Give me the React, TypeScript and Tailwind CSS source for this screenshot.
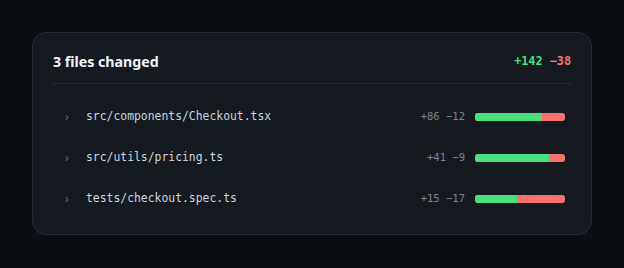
import React from 'react'

// ── Data ──────────────────────────────────────────────────────────────────────
const FILES = [
  { path: 'src/components/Checkout.tsx', add: 86, del: 12, ratio: 74 },
  { path: 'src/utils/pricing.ts', add: 41, del: 9, ratio: 82 },
  { path: 'tests/checkout.spec.ts', add: 15, del: 17, ratio: 47 },
]

const mono = { fontFamily: '"DejaVu Sans Mono", "Liberation Mono", monospace' }

// ── Row ───────────────────────────────────────────────────────────────────────
function FileRow({ file }: { file: (typeof FILES)[number] }) {
  return (
    <div className="flex h-[41px] items-center pl-3 pr-1.5">
      <span className="w-[10px] text-[12px] leading-none text-[#646c77]">›</span>
      <span className="ml-[11px] flex-1 text-[11.4px] text-[#cdd5de]" style={mono}>
        {file.path}
      </span>
      <span className="text-[10.5px] text-[#7d8590]" style={mono}>
        +{file.add} −{file.del}
      </span>
      <div className="ml-2.5 flex h-2 w-[90px] overflow-hidden rounded-[3px] bg-[#f87171]">
        {/* ratio is per-file data */}
        <div className="h-full bg-[#4ade80]" style={{ width: `${file.ratio}%` }} />
      </div>
    </div>
  )
}

// ── App ───────────────────────────────────────────────────────────────────────
export default function App() {
  return (
    <div className="min-h-screen bg-[#0b0e13] p-8">
      <div className="rounded-[14px] border border-[#262c35] bg-[#151a21] px-5 pt-[19px] pb-[15px]">
        <div className="box-content flex h-5 items-center justify-between border-b border-[#262c35] pb-[11px]">
          <h2
            className="text-[14.2px] font-bold text-[#f0f6fc]"
            style={{ fontFamily: '"Noto Sans", "Open Sans", sans-serif' }}
          >
            3 files changed
          </h2>
          <div className="text-[11.8px] font-bold" style={mono}>
            <span className="text-[#4ade80]">+142</span>{' '}
            <span className="text-[#f87171]">−38</span>
          </div>
        </div>
        <div className="pt-3">
          {FILES.map((f) => (
            <FileRow key={f.path} file={f} />
          ))}
        </div>
      </div>
    </div>
  )
}
